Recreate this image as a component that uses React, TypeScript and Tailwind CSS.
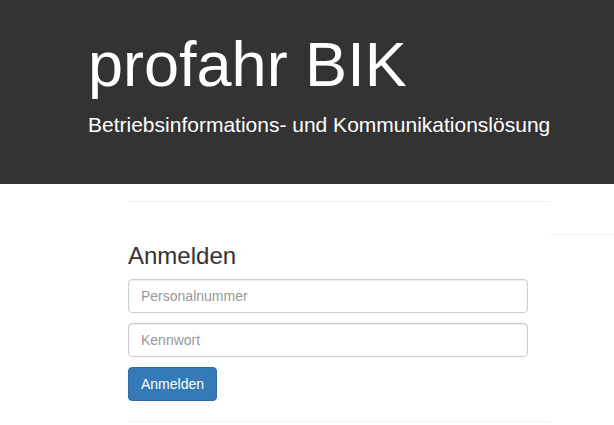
import React from "react";

export default function App() {
  return (
    <div className="min-h-[425px] bg-white font-['Liberation_Sans',Arial,sans-serif]">
      <header className="h-[184px] bg-[#333333] pl-[88px] pt-[30px] text-white">
        <h1 className="text-[63px] leading-[1.1]">profahr BIK</h1>
        <p className="mt-[11px] text-[21px] leading-[30px]">
          Betriebsinformations- und Kommunikationslösung
        </p>
      </header>
      <div className="flex">
        <div className="ml-[128px] w-[422px]">
          <hr className="mt-[17px] border-t border-[#eeeeee]" />
          <h3 className="mt-[41px] text-[24px] leading-[1.1] text-[#333333]">Anmelden</h3>
          <form className="mt-[10px] flex w-[400px] flex-col gap-[10px]">
            <input
              type="text"
              placeholder="Personalnummer"
              className="h-[34px] w-full rounded-[4px] border border-[#cccccc] px-[12px] py-[6px] text-[14px] text-[#555555] placeholder:text-[#999999] shadow-[inset_0_1px_1px_rgba(0,0,0,0.075)] outline-none"
            />
            <input
              type="password"
              placeholder="Kennwort"
              className="h-[34px] w-full rounded-[4px] border border-[#cccccc] px-[12px] py-[6px] text-[14px] text-[#555555] placeholder:text-[#999999] shadow-[inset_0_1px_1px_rgba(0,0,0,0.075)] outline-none"
            />
            <button
              type="button"
              className="self-start rounded-[4px] border border-[#2e6da4] bg-[#337ab7] px-[12px] py-[6px] text-[14px] leading-[20px] text-white"
            >
              Anmelden
            </button>
          </form>
          <hr className="mt-[20px] border-t border-[#eeeeee]" />
        </div>
        <div className="mt-[50px] h-0 flex-1 border-t border-[#eeeeee]" />
      </div>
    </div>
  );
}
